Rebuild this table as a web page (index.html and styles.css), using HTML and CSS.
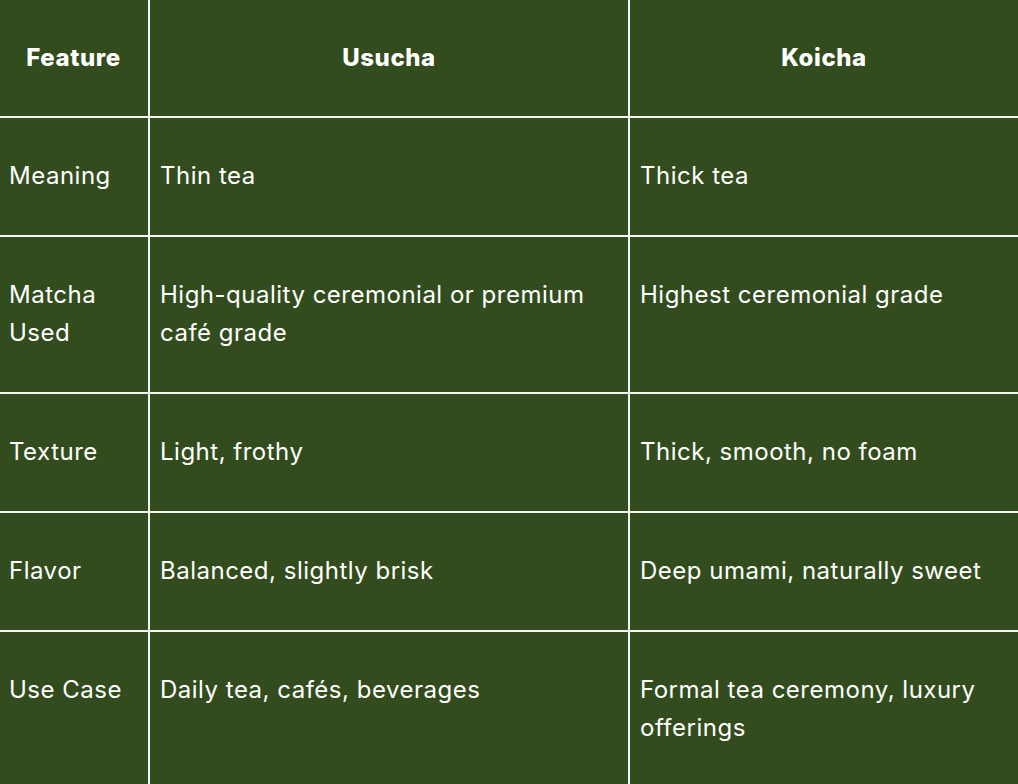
FILE: index.html
```html
<!DOCTYPE html>
<html lang="en">
<head>
<meta charset="utf-8">
<title>Usucha vs Koicha</title>
<link rel="stylesheet" href="styles.css">
</head>
<body>
<table class="compare">
  <colgroup>
    <col class="c1">
    <col class="c2">
    <col class="c3">
  </colgroup>
  <thead>
    <tr>
      <th>Feature</th>
      <th>Usucha</th>
      <th>Koicha</th>
    </tr>
  </thead>
  <tbody>
    <tr>
      <td>Meaning</td>
      <td>Thin tea</td>
      <td>Thick tea</td>
    </tr>
    <tr>
      <td>Matcha Used</td>
      <td>High-quality ceremonial or premium café grade</td>
      <td>Highest ceremonial grade</td>
    </tr>
    <tr>
      <td>Texture</td>
      <td>Light, frothy</td>
      <td>Thick, smooth, no foam</td>
    </tr>
    <tr>
      <td>Flavor</td>
      <td>Balanced, slightly brisk</td>
      <td>Deep umami, naturally sweet</td>
    </tr>
    <tr>
      <td>Use Case</td>
      <td>Daily tea, cafés, beverages</td>
      <td>Formal tea ceremony, luxury offerings</td>
    </tr>
  </tbody>
</table>
</body>
</html>
```

FILE: styles.css
```css
html, body {
  margin: 0;
  padding: 0;
  background: #324c1e;
  overflow: hidden;
}

.compare {
  border-collapse: collapse;
  table-layout: fixed;
  width: 1018px;
  background: #324c1e;
  color: #ffffff;
  font-family: Inter, "Noto Sans", "Liberation Sans", sans-serif;
  font-size: 24px;
  letter-spacing: 0.5px;
  line-height: 38px;
}

.c1 { width: 149px; }
.c2 { width: 480px; }
.c3 { width: 389px; }

.compare th,
.compare td {
  border: 2px solid #f4f4f2;
  padding: 39px 10px 40px;
  vertical-align: top;
  text-align: left;
}

.compare tr > :first-child {
  border-left: none;
  padding-left: 9px;
}

.compare tr > :last-child {
  border-right: none;
}

.compare thead th {
  border-top: none;
  height: 117px;
  padding: 0 10px;
  box-sizing: border-box;
  vertical-align: middle;
  text-align: center;
  font-weight: 800;
  letter-spacing: 0.6px;
}
```
